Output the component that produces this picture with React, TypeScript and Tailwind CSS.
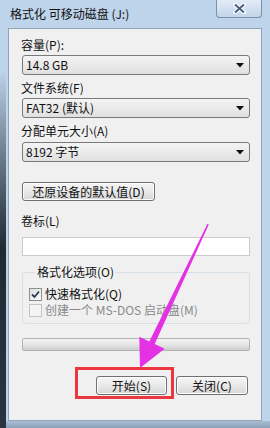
import React from "react";

const font = "font-['Noto_Sans_CJK_SC','Noto_Sans',sans-serif]";

function Combo({ value }: { value: string }) {
  return (
    <div className="flex h-[20px] w-[228px] items-center justify-between rounded-[3px] border border-[#7a7a7a] bg-gradient-to-b from-[#f4f4f4] to-[#e0e0e0] pl-[3px] pr-[5px] text-[12px] leading-none text-[#111]">
      <span>{value}</span>
      <svg width="8" height="5" viewBox="0 0 8 5">
        <path d="M0 0H8L4 4.5Z" fill="#111" />
      </svg>
    </div>
  );
}

function Label({ text, className = "" }: { text: string; className?: string }) {
  return <div className={`h-[14px] text-[12px] leading-[14px] text-[#111] ${className}`}>{text}</div>;
}

function Button({ text, w, className = "" }: { text: string; w: string; className?: string }) {
  return (
    <div
      className={`flex h-[19px] items-center justify-center rounded-[3px] border border-[#707070] bg-gradient-to-b from-[#f6f6f6] via-[#e9e9e9] to-[#d6d6d6] text-[12px] leading-none text-[#111] shadow-[inset_0_0_0_1px_#fcfcfc] ${w} ${className}`}
    >
      {text}
    </div>
  );
}

function CheckRow({ text, checked, disabled }: { text: string; checked?: boolean; disabled?: boolean }) {
  return (
    <div className="flex h-[14px] items-center gap-[3px]">
      <div
        className={`flex h-[13px] w-[13px] items-center justify-center border ${
          disabled ? "border-[#c4c4c4] bg-[#f4f4f4]" : "border-[#8e8f8f] bg-gradient-to-br from-[#dedede] to-[#fbfbfb]"
        }`}
      >
        {checked && (
          <svg width="9" height="9" viewBox="0 0 9 9">
            <path d="M1 4.5L3.5 7L8 1.5" fill="none" stroke="#303a4f" strokeWidth="1.8" />
          </svg>
        )}
      </div>
      <span className={`text-[12px] leading-none ${disabled ? "text-[#8a8a8a]" : "text-[#111]"}`}>{text}</span>
    </div>
  );
}

export default function App() {
  return (
    <div className={`relative h-[428px] w-[270px] overflow-hidden bg-[#bed4eb] ${font}`}>
      {/* desktop showing at the left edge */}
      <div className="absolute bottom-0 left-0 top-[70px] w-[6px] bg-gradient-to-b from-[#bed4eb] via-[#1f2a33] to-[#2a3540]" />

      <div className="flex h-[28px] items-start justify-between pl-[10px] pr-[8px]">
        <span className="mt-[7px] text-[12px] leading-[14px] text-[#111]">格式化 可移动磁盘 (J:)</span>
        <div className="flex h-[18px] w-[46px] items-center justify-center rounded-b-[4px] border border-t-0 border-[#7d90a8] bg-gradient-to-b from-[#e3ecf7] to-[#c3d5eb]">
          <svg width="13" height="11" viewBox="0 0 13 11">
            <path d="M2 1.5L11 9.5M11 1.5L2 9.5" stroke="#ffffff" strokeWidth="4" strokeLinecap="round" />
            <path d="M2 1.5L11 9.5M11 1.5L2 9.5" stroke="#4c5f7e" strokeWidth="2" />
          </svg>
        </div>
      </div>

      <div className="ml-[8px] flex h-[393px] w-[254px] flex-col border border-[#8fa3b9] bg-[#f0f0f0] pl-[13px]">
        <Label text="容量(P):" className="mt-[9px] ml-[-1px]" />
        <div className="mt-[3px]">
          <Combo value="14.8 GB" />
        </div>
        <Label text="文件系统(F)" className="mt-[6px] ml-[-1px]" />
        <div className="mt-[3px]">
          <Combo value="FAT32 (默认)" />
        </div>
        <Label text="分配单元大小(A)" className="mt-[6px] ml-[-1px]" />
        <div className="mt-[4px]">
          <Combo value="8192 字节" />
        </div>
        <Button text="还原设备的默认值(D)" w="w-[133px]" className="mt-[20px]" />
        <Label text="卷标(L)" className="mt-[13px] ml-[-1px]" />
        <div className="mt-[9px] h-[19px] w-[228px] border border-[#c9cbd0] bg-white" />

        <fieldset className="mt-[9px] w-[228px] rounded-[3px] border border-[#d5dfe5] pb-[6px] pl-[6px]">
          <legend className="ml-[6px] px-[2px] text-[12px] leading-[14px] text-[#111]">格式化选项(O)</legend>
          <div className="mt-[8px]">
            <CheckRow text="快速格式化(Q)" checked />
          </div>
          <div className="mt-[2px]">
            <CheckRow text="创建一个 MS-DOS 启动盘(M)" disabled />
          </div>
        </fieldset>

        <div className="mt-[14px] h-[13px] w-[228px] rounded-[2px] border border-[#b4b4b4] bg-gradient-to-b from-[#f3f3f3] via-[#e6e6e6] to-[#cfcfcf]" />

        <div className="mt-[25px] flex w-[226px] justify-end gap-[9px]">
          <Button text="开始(S)" w="w-[71px]" />
          <Button text="关闭(C)" w="w-[72px]" />
        </div>
      </div>

      <div className="h-[7px] bg-gradient-to-b from-[#a9bed3] to-[#8aa1b9]" />

      {/* red highlight box */}
      <div className="absolute left-[75px] top-[367px] h-[32px] w-[99px] border-[3px] border-[#ec3640]" />

      {/* magenta arrow */}
      <svg className="pointer-events-none absolute left-0 top-0" width="270" height="428" viewBox="0 0 270 428">
        <polygon
          points="207.5,223.8 208.8,224.4 154.7,344 164.7,348.7 140,368 139.3,336.7 149.3,341.4"
          fill="#e431e4"
        />
      </svg>
    </div>
  );
}
